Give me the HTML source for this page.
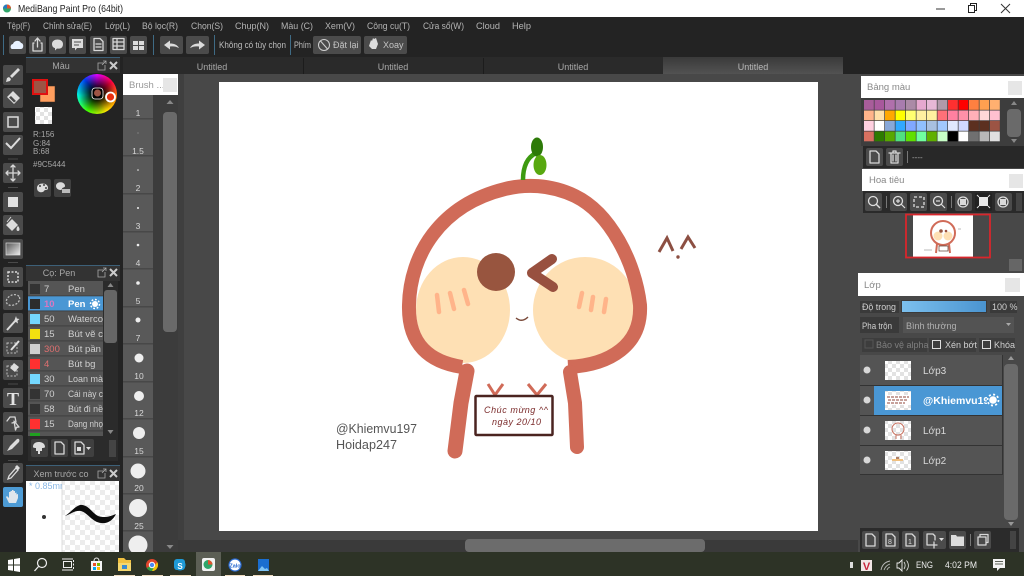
<!DOCTYPE html>
<html><head><meta charset="utf-8"><title>MediBang Paint Pro</title>
<style>
html,body{margin:0;padding:0;width:1024px;height:576px;overflow:hidden;background:#484848}
svg{position:absolute;left:0;top:0;display:block}
text{font-family:"Liberation Sans","DejaVu Sans",sans-serif;font-size:9px;fill:#bdbdbd}
.m{font-size:9.5px;fill:#b4b4b4}
.b{fill:#4b4b4b}
.i{fill:none;stroke:#d8d8d8;stroke-width:1.3;stroke-linecap:round;stroke-linejoin:round}
.f{fill:#dcdcdc}
.n{font-size:9.5px;fill:#cfcfcf}
.s{fill:#d8d8d8;font-size:8.5px;text-anchor:middle}
.h{fill:#a8a8a8;font-size:9.5px}
#pal rect{width:9.8px;height:9.8px}
#wheel{position:absolute;left:77px;top:74px;width:40px;height:40px;border-radius:50%;background:radial-gradient(circle,#000 0,#000 16%,rgba(0,0,0,0) 68%),conic-gradient(#e000ff,#ff0040 50deg,#ff8000 100deg,#ffe000 150deg,#40ff00 210deg,#00ffe0 265deg,#0040ff 320deg,#e000ff)}
</style></head>
<body>
<svg width="1024" height="576" viewBox="0 0 1024 576" xmlns="http://www.w3.org/2000/svg">
<defs>
<pattern id="ck" width="8" height="8" patternUnits="userSpaceOnUse"><rect width="8" height="8" fill="#fff"/><rect width="4" height="4" fill="#e2e2e2"/><rect x="4" y="4" width="4" height="4" fill="#e2e2e2"/></pattern>
<pattern id="ck2" width="10" height="10" patternUnits="userSpaceOnUse"><rect width="10" height="10" fill="#fff"/><rect width="5" height="5" fill="#ececec"/><rect x="5" y="5" width="5" height="5" fill="#ececec"/></pattern>
<linearGradient id="tab" x1="0" y1="0" x2="0" y2="1"><stop offset="0" stop-color="#3a3a3a"/><stop offset="1" stop-color="#525252"/></linearGradient>
<linearGradient id="sl" x1="0" y1="0" x2="1" y2="0"><stop offset="0" stop-color="#7cc0ee"/><stop offset="1" stop-color="#4a94d0"/></linearGradient>
<linearGradient id="gr" x1="0" y1="0" x2="1" y2="1"><stop offset="0" stop-color="#555"/><stop offset="1" stop-color="#eee"/></linearGradient>
</defs>

<!-- base -->
<rect width="1024" height="576" fill="#484848"/>
<rect width="1024" height="17" fill="#fff"/>
<rect y="17" width="1024" height="57" fill="#232323"/>

<!-- title bar -->
<circle cx="7" cy="8.5" r="4" fill="#2fa56a"/><path d="M7 4.5a4 4 0 0 1 4 4H7z" fill="#e0532f"/><path d="M3 8.500a4 4 0 0 1 4-4v4z" fill="#2a7ac0"/>
<text x="18" y="12" style="font-size:10.5px;fill:#222" textLength="105" lengthAdjust="spacingAndGlyphs">MediBang Paint Pro (64bit)</text>
<path d="M936 9h9" stroke="#333" stroke-width="1"/>
<rect x="968.500" y="5.500" width="6" height="7" fill="#fff" stroke="#222"/><path d="M970.500 5.500v-2h6v7h-2" fill="none" stroke="#222"/>
<path d="M1001 4l9 9M1010 4l-9 9" stroke="#333" stroke-width="1"/>

<!-- menu -->
<text class="m" x="7" y="29" textLength="23" lengthAdjust="spacingAndGlyphs">Tệp(F)</text>
<text class="m" x="43" y="29" textLength="49" lengthAdjust="spacingAndGlyphs">Chỉnh sửa(E)</text>
<text class="m" x="105" y="29" textLength="25" lengthAdjust="spacingAndGlyphs">Lớp(L)</text>
<text class="m" x="142" y="29" textLength="36" lengthAdjust="spacingAndGlyphs">Bộ lọc(R)</text>
<text class="m" x="191" y="29" textLength="32" lengthAdjust="spacingAndGlyphs">Chọn(S)</text>
<text class="m" x="235" y="29" textLength="34" lengthAdjust="spacingAndGlyphs">Chụp(N)</text>
<text class="m" x="281" y="29" textLength="32" lengthAdjust="spacingAndGlyphs">Màu (C)</text>
<text class="m" x="325" y="29" textLength="30" lengthAdjust="spacingAndGlyphs">Xem(V)</text>
<text class="m" x="367" y="29" textLength="43" lengthAdjust="spacingAndGlyphs">Công cụ(T)</text>
<text class="m" x="423" y="29" textLength="41" lengthAdjust="spacingAndGlyphs">Cửa sổ(W)</text>
<text class="m" x="476" y="29" textLength="24" lengthAdjust="spacingAndGlyphs">Cloud</text>
<text class="m" x="512" y="29" textLength="19" lengthAdjust="spacingAndGlyphs">Help</text>

<!-- toolbar -->
<rect x="3" y="35" width="1" height="20" fill="#3f6b85"/>
<rect x="9" y="36" width="17" height="18" rx="2" class="b"/><path d="M12 49c-2 0-2-5 1-5 1-4 7-4 8-1 3 0 3 6 0 6z" fill="#e8f2ff"/>
<rect x="29" y="36" width="17" height="18" rx="2" class="b"/><path class="i" d="M34 43h-1v8h9v-8h-1M37.500 47v-8M35 41l2.500-3 2.500 3"/>
<rect x="49" y="36" width="17" height="18" rx="2" class="b"/><path class="f" d="M52 44c0-6 11-6 11 0s-6 4.500-6 4.500l-2 2v-2.500c-1 0-3-1-3-4z"/>
<rect x="69" y="36" width="17" height="18" rx="2" class="b"/><path class="f" d="M72 39h11v9h-6l-2 2.500v-2.500h-3z"/><path d="M74 42h7M74 45h5" stroke="#4b4b4b"/>
<rect x="90" y="36" width="17" height="18" rx="2" class="b"/><path class="i" d="M94 38.500h6l3 3v9h-9zM96 44h5M96 47h5"/>
<rect x="110" y="36" width="17" height="18" rx="2" class="b"/><path class="i" d="M113 38.500h11v11h-11zM113 42h11M113 46h11M117 38.500v11"/>
<rect x="130" y="36" width="17" height="18" rx="2" class="b"/><path class="f" d="M133 41h5v4h-5zM139 41h5v4h-5zM133 46h5v4h-5zM139 46h5v4h-5z"/>
<rect x="153" y="35" width="1" height="20" fill="#3f6b85"/>
<rect x="160" y="36" width="23" height="18" rx="2" class="b"/><path class="f" d="M164 45l6-4.500v3c4 0 7 1 9 4.500-3-1.500-5-2-9-1.500v3z"/>
<rect x="186" y="36" width="23" height="18" rx="2" class="b"/><path class="f" d="M205 45l-6-4.500v3c-4 0-7 1-9 4.500 3-1.500 5-2 9-1.500v3z"/>
<rect x="214" y="35" width="1" height="20" fill="#3f6b85"/>
<text x="219" y="48" style="font-size:9px;fill:#bdbdbd" textLength="67" lengthAdjust="spacingAndGlyphs">Không có tùy chọn</text>
<rect x="290" y="35" width="1" height="20" fill="#3f6b85"/>
<text x="294" y="48" style="font-size:9px;fill:#bdbdbd" textLength="17" lengthAdjust="spacingAndGlyphs">Phím</text>
<rect x="313" y="36" width="48" height="18" rx="2" class="b"/><circle cx="324" cy="45" r="5.500" fill="none" stroke="#d0d0d0"/><path d="M320.500 41l7 8" stroke="#d0d0d0"/>
<text x="333" y="48" style="font-size:9px;fill:#c4c4c4">Đặt lại</text>
<rect x="364" y="36" width="43" height="18" rx="2" class="b"/><path class="f" d="M369 46l2-6 1 1 1-3 1 1 2-1 1 3 1 3-2 5h-4z"/>
<text x="383" y="48" style="font-size:9px;fill:#c4c4c4">Xoay</text>

<!-- tabs -->
<rect x="123" y="57" width="720" height="17" fill="#2a2a2a"/>
<rect x="303" y="58" width="1" height="16" fill="#1c1c1c"/><rect x="483" y="58" width="1" height="16" fill="#1c1c1c"/>
<rect x="663" y="57" width="180" height="17" fill="url(#tab)"/>
<text x="212" y="70" text-anchor="middle" style="fill:#a8a8a8">Untitled</text>
<text x="393" y="70" text-anchor="middle" style="fill:#a8a8a8">Untitled</text>
<text x="573" y="70" text-anchor="middle" style="fill:#a8a8a8">Untitled</text>
<text x="753" y="70" text-anchor="middle" style="fill:#b8b8b8">Untitled</text>

<!-- left column -->
<rect y="57" width="123" height="495" fill="#232323"/>
<!-- tool buttons -->
<g>
<rect x="3" y="65" width="20" height="20" rx="2" class="b"/><path d="M6 82l1-4 2-1 2 2-1 2zM10 76l8-8 2 2-8 8z" class="f"/>
<rect x="3" y="88" width="20" height="20" rx="2" class="b"/><path class="f" d="M13 91l7 7-6 6-7-7z"/><path d="M11 96l5 5-2 1.500-5-5z" fill="#4b4b4b"/>
<rect x="3" y="112" width="20" height="20" rx="2" class="b"/><rect x="8" y="117" width="10" height="10" fill="none" stroke="#dcdcdc" stroke-width="1.500"/>
<rect x="3" y="135" width="20" height="20" rx="2" class="b"/><path d="M6 143l5 5 9-10" stroke="#dcdcdc" stroke-width="2" fill="none"/>
<rect x="8" y="158.500" width="10" height="1" fill="#4a4a4a"/>
<rect x="3" y="163" width="20" height="20" rx="2" class="b"/><path class="i" d="M13 165v16M6 173h14M11 167l2-2 2 2M11 179l2 2 2-2M8 171l-2 2 2 2M18 171l2 2-2 2"/>
<rect x="8" y="187" width="10" height="1" fill="#4a4a4a"/>
<rect x="3" y="192" width="20" height="20" rx="2" class="b"/><rect x="8" y="197" width="10" height="10" fill="#e2e2e2"/>
<rect x="3" y="215" width="20" height="20" rx="2" class="b"/><path class="f" d="M6 225l6-6 6 6-6 6z"/><path d="M18 226c2 2 2 5 0 5s-2-3 0-5z" fill="#dcdcdc"/><path d="M7 222l4-5" stroke="#dcdcdc"/>
<rect x="3" y="239" width="20" height="20" rx="2" class="b"/><rect x="6" y="243" width="14" height="12" fill="url(#gr)" stroke="#ddd" stroke-width=".7"/>
<rect x="8" y="262" width="10" height="1" fill="#4a4a4a"/>
<rect x="3" y="267" width="20" height="20" rx="2" class="b"/><rect x="8" y="272" width="10" height="10" fill="none" stroke="#dcdcdc" stroke-width="1.500" stroke-dasharray="2 1.500"/>
<rect x="3" y="290" width="20" height="20" rx="2" class="b"/><ellipse cx="13" cy="300" rx="7" ry="5" transform="rotate(-25 13 300)" fill="none" stroke="#bbb" stroke-width="1.300" stroke-dasharray="2 1.500"/>
<rect x="3" y="313" width="20" height="20" rx="2" class="b"/><path d="M7 330l9-10" stroke="#dcdcdc" stroke-width="2"/><path d="M16 316l.8 2.500 2.700.5-2 1.800.5 2.700-2.200-1.500-2.300 1z" fill="#dcdcdc"/>
<rect x="3" y="337" width="20" height="20" rx="2" class="b"/><rect x="7" y="343" width="10" height="10" fill="none" stroke="#bbb" stroke-dasharray="2 1.500"/><path d="M11 350l8-9" stroke="#e0e0e0" stroke-width="2"/>
<rect x="3" y="360" width="20" height="20" rx="2" class="b"/><rect x="7" y="366" width="10" height="10" fill="none" stroke="#bbb" stroke-dasharray="2 1.500"/><path class="f" d="M14 363l5 4-4 5-5-4z"/>
<rect x="8" y="383.500" width="10" height="1" fill="#4a4a4a"/>
<rect x="3" y="388" width="20" height="20" rx="2" class="b"/><text x="13" y="405" text-anchor="middle" style="font-family:'Liberation Serif',serif;font-size:18px;font-weight:bold;fill:#e4e4e4">T</text>
<rect x="3" y="412" width="20" height="20" rx="2" class="b"/><path class="i" d="M7 421l3-4h5l1 5-4 1M14 421l5 6-2.500.3-1 2.700z"/>
<rect x="3" y="435" width="20" height="20" rx="2" class="b"/><path class="f" d="M7 451l3-5 7-7c2-1 3 1 2 3l-7 7z"/>
<rect x="8" y="460" width="10" height="1" fill="#4a4a4a"/>
<rect x="3" y="463" width="20" height="20" rx="2" class="b"/><path d="M8 479l1-3 7-8 2 2-7 8z" fill="none" stroke="#dcdcdc" stroke-width="1.300"/><path d="M15 467l2-2 3 3-2 2z" fill="#dcdcdc"/>
<rect x="3" y="487" width="20" height="20" rx="2" fill="#4d9bd5"/><path d="M9 503l-3-6 1-1 2 2v-6h1.500v-1h1.500v-1h1.500v1h1.500v2l1.500-.5v2l1.500-.5v4l-2 5z" fill="#dfe6ec"/>
</g>

<!-- Colour panel -->
<rect x="26" y="57" width="94" height="1" fill="#3d6078"/>
<rect x="26" y="58" width="94" height="15" fill="#333"/>
<text x="61" y="69" class="h" text-anchor="middle" style="font-size:9px">Màu</text>
<path d="M104 63h-6v7h7v-5M102 65l4-4M103 61h3v3" fill="none" stroke="#aaa" stroke-width=".8"/>
<path d="M110 62l7 7M117 62l-7 7" stroke="#ccc" stroke-width="2"/>
<rect x="40" y="86" width="15" height="16" fill="#ff9e5e" stroke="#3a2a20" stroke-width=".5"/>
<rect x="33" y="80" width="14" height="14" fill="#9c5444" stroke="#e01010" stroke-width="2"/>
<rect x="35" y="107" width="17" height="17" fill="url(#ck)"/>
<text x="33" y="137" style="font-size:8px;fill:#a6a6a6">R:156</text>
<text x="33" y="146" style="font-size:8px;fill:#a6a6a6">G:84</text>
<text x="33" y="154" style="font-size:8px;fill:#a6a6a6">B:68</text>
<text x="33" y="167" style="font-size:8px;fill:#a6a6a6">#9C5444</text>
<rect x="34" y="179" width="17" height="18" rx="2" fill="#404040"/><path class="f" d="M37 188c0-6 11-6 11 0 0 3-3 1-4 3s-7 2-7-3z"/><circle cx="40" cy="186" r="1" fill="#404040"/><circle cx="44" cy="185" r="1" fill="#404040"/><circle cx="46" cy="188" r="1" fill="#404040"/>
<rect x="54" y="179" width="17" height="18" rx="2" fill="#404040"/><path class="f" d="M56 186c0-5 9-5 9 0 0 2-3 1-3 3s-6 1-6-3z"/><rect x="62" y="189" width="8" height="4" fill="#bbb"/>

<!-- Brush panel -->
<rect x="26" y="265" width="94" height="1" fill="#3d6078"/>
<rect x="26" y="266" width="94" height="15" fill="#333"/>
<text x="59" y="276" class="h" text-anchor="middle" style="font-size:9px">Cọ: Pen</text>
<path d="M104 270h-6v7h7v-5M102 272l4-4M103 268h3v3" fill="none" stroke="#aaa" stroke-width=".8"/>
<path d="M110 269l7 7M117 269l-7 7" stroke="#ccc" stroke-width="2"/>
<rect x="28" y="281" width="75" height="155" fill="#555"/>
<rect x="28" y="296" width="75" height="15" fill="#4a97d4"/>
<g fill="#3a3a3a"><rect x="28" y="295.500" width="75" height=".8"/><rect x="28" y="310.500" width="75" height=".8"/><rect x="28" y="325.500" width="75" height=".8"/><rect x="28" y="340.500" width="75" height=".8"/><rect x="28" y="355.500" width="75" height=".8"/><rect x="28" y="370.500" width="75" height=".8"/><rect x="28" y="385.500" width="75" height=".8"/><rect x="28" y="400.500" width="75" height=".8"/><rect x="28" y="415.500" width="75" height=".8"/><rect x="28" y="430.500" width="75" height=".8"/></g>
<rect x="30" y="284" width="10" height="10" fill="#333"/>
<rect x="30" y="299" width="10" height="10" fill="#2c2c2c"/>
<rect x="30" y="314" width="10" height="10" fill="#74d8ff"/>
<rect x="30" y="329" width="10" height="10" fill="#f2e010"/>
<rect x="30" y="344" width="10" height="10" fill="#d0d0d0"/>
<rect x="30" y="359" width="10" height="10" fill="#ff3030"/>
<rect x="30" y="374" width="10" height="10" fill="#74d8ff"/>
<rect x="30" y="389" width="10" height="10" fill="#333"/>
<rect x="30" y="404" width="10" height="10" fill="#333"/>
<rect x="30" y="419" width="10" height="10" fill="#ff3030"/>
<rect x="30" y="433" width="10" height="3" fill="#20a020"/>
<text class="n" x="44" y="292">7</text><text class="n" x="68" y="292">Pen</text>
<text class="n" x="44" y="307" style="fill:#d878c0;font-weight:bold">10</text><text class="n" x="68" y="307" style="fill:#fff;font-weight:bold">Pen</text>
<circle cx="95" cy="304" r="3" fill="#fff"/><circle cx="95" cy="304" r="4.500" fill="none" stroke="#fff" stroke-width="1.500" stroke-dasharray="1.800 1.700"/>
<text class="n" x="44" y="322">50</text><text class="n" x="68" y="322" textLength="35" lengthAdjust="spacingAndGlyphs">Waterco</text>
<text class="n" x="44" y="337">15</text><text class="n" x="68" y="337" textLength="35" lengthAdjust="spacingAndGlyphs">Bút vẽ c</text>
<text class="n" x="44" y="352" style="fill:#e07070">300</text><text class="n" x="68" y="352" textLength="33" lengthAdjust="spacingAndGlyphs">Bút pần</text>
<text class="n" x="44" y="367" style="fill:#e07070">4</text><text class="n" x="68" y="367">Bút bg</text>
<text class="n" x="44" y="382">30</text><text class="n" x="68" y="382" textLength="35" lengthAdjust="spacingAndGlyphs">Loan mà</text>
<text class="n" x="44" y="397">70</text><text class="n" x="68" y="397" textLength="35" lengthAdjust="spacingAndGlyphs">Cái này c</text>
<text class="n" x="44" y="412">58</text><text class="n" x="68" y="412" textLength="35" lengthAdjust="spacingAndGlyphs">Bút đi nề</text>
<text class="n" x="44" y="427">15</text><text class="n" x="68" y="427" textLength="35" lengthAdjust="spacingAndGlyphs">Dạng nhọ</text>
<rect x="103" y="281" width="15" height="155" fill="#2b2b2b"/>
<rect x="104" y="290" width="13" height="53" rx="3" fill="#666"/>
<path d="M110.500 283l-3 4h6zM110.500 434l-3-4h6z" fill="#888"/>
<rect x="28" y="436" width="90" height="25" fill="#2b2b2b"/>
<rect x="31" y="439" width="17" height="18" rx="2" fill="#404040"/><path class="f" d="M33 447c0-5 5-5 6-5 2 0 6 1 6 5 0 1-3 1-3 1v3h-2v3h-2v-3h-2v-3s-3 0-3-1z"/>
<rect x="51" y="439" width="17" height="18" rx="2" fill="#404040"/><path class="i" d="M55 442h6l3 3v9h-9z"/>
<rect x="71" y="439" width="23" height="18" rx="2" fill="#404040"/><path class="i" d="M75 442h6l3 3v9h-9z"/><rect x="77" y="447" width="4" height="4" fill="#ddd"/><path d="M86 447l5 0-2.500 3z" fill="#ddd"/>
<rect x="109" y="440" width="7" height="17" fill="#444"/>

<!-- Preview panel -->
<rect x="26" y="465" width="94" height="1" fill="#3d6078"/>
<rect x="26" y="466" width="94" height="15" fill="#333"/>
<text x="61" y="477" class="h" text-anchor="middle" style="font-size:9px">Xem trước co</text>
<path d="M104 471h-6v7h7v-5M102 473l4-4M103 469h3v3" fill="none" stroke="#aaa" stroke-width=".8"/>
<path d="M110 470l7 7M117 470l-7 7" stroke="#ccc" stroke-width="2"/>
<rect x="26" y="481" width="36" height="71" fill="#fff"/>
<rect x="62" y="481" width="57" height="71" fill="url(#ck2)"/>
<rect x="61.500" y="481" width="1" height="71" fill="#ddd"/>
<svg x="26" y="481" width="36" height="20"><text x="3" y="8" style="font-size:9px;fill:#8ab8e6">* 0.85mm</text></svg>
<circle cx="44" cy="517" r="2" fill="#333"/>
<path d="M65 516c5-3 9-9 15-11 8-1 12 8 18 11 6 2 11 1 18-2-3 6-8 10-15 9-9-1-13-10-20-12-6-1-10 3-16 5z" fill="#0c0c0c"/>

<!-- Brush size panel -->
<rect x="123" y="74" width="55" height="478" fill="#3c3c3c"/>
<rect x="123" y="74" width="55" height="21" fill="#fff"/>
<text x="129" y="88" style="font-size:9.5px;fill:#999">Brush ...</text>
<rect x="163" y="78" width="14" height="14" fill="#e6e6e6"/>
<rect x="123" y="95" width="30" height="457" fill="#595959"/>
<g fill="#484848"><rect x="123" y="118" width="30" height="1.500"/><rect x="123" y="155" width="30" height="1.500"/><rect x="123" y="193" width="30" height="1.500"/><rect x="123" y="231" width="30" height="1.500"/><rect x="123" y="268" width="30" height="1.500"/><rect x="123" y="306" width="30" height="1.500"/><rect x="123" y="343" width="30" height="1.500"/><rect x="123" y="381" width="30" height="1.500"/><rect x="123" y="418" width="30" height="1.500"/><rect x="123" y="456" width="30" height="1.500"/><rect x="123" y="493" width="30" height="1.500"/><rect x="123" y="530" width="30" height="1.500"/></g>
<g fill="#eee">
<circle cx="138" cy="133" r=".6" fill="#999"/><circle cx="138" cy="170" r=".8"/><circle cx="138" cy="208" r="1"/><circle cx="138" cy="245" r="1.300"/><circle cx="138" cy="283" r="1.800"/><circle cx="138" cy="320" r="2.500"/><circle cx="139" cy="358" r="4.500"/><circle cx="139" cy="396" r="5"/><circle cx="139" cy="433" r="6"/><circle cx="138" cy="471" r="7.500"/><circle cx="138" cy="508" r="9"/><circle cx="138" cy="545" r="9.500"/>
</g>
<g class="s"><text class="s" x="138" y="116">1</text><text class="s" x="138" y="154">1.5</text><text class="s" x="138" y="191">2</text><text class="s" x="138" y="229">3</text><text class="s" x="138" y="266">4</text><text class="s" x="138" y="304">5</text><text class="s" x="138" y="341">7</text><text class="s" x="139" y="379">10</text><text class="s" x="139" y="416">12</text><text class="s" x="139" y="454">15</text><text class="s" x="139" y="491">20</text><text class="s" x="139" y="529">25</text></g>
<rect x="163" y="112" width="14" height="220" rx="4" fill="#6a6a6a"/>
<path d="M170 100l-3.500 4h7zM170 549l-3.500-4h7z" fill="#888"/>

<!-- canvas area -->
<rect x="178" y="74" width="683" height="466" fill="#484848"/>
<rect x="178" y="74" width="6" height="466" fill="#3f3f3f"/>
<rect x="178" y="540" width="680" height="12" fill="#3a3a3a"/>
<rect x="465" y="539" width="240" height="13" rx="4" fill="#6c6c6c"/>
<rect x="219" y="82" width="599" height="449" fill="#fff"/>

<!-- drawing -->
<ellipse cx="463" cy="310" rx="47" ry="53" fill="#fee0b4"/>
<ellipse cx="585" cy="310" rx="52" ry="53" fill="#fee0b4"/>
<path d="M462 367C430 362 408 345 409 305C410 255 440 205 505 189C525 184 550 184 575 196C610 213 635 262 640 305C642 345 610 365 568 367" fill="none" stroke="#d06b58" stroke-width="14" stroke-linejoin="round"/>
<path d="M467 371L461 403L455 451" fill="none" stroke="#d06b58" stroke-width="15" stroke-linecap="round"/>
<path d="M570 372L575 403L577 447" fill="none" stroke="#d06b58" stroke-width="14" stroke-linecap="round"/>
<circle cx="496" cy="272" r="19" fill="#98553f"/>
<path d="M552 259L532 273L553 287" fill="none" stroke="#98503f" stroke-width="10" stroke-linecap="round" stroke-linejoin="round"/>
<g fill="none" stroke="#ffb48a" stroke-width="4.500" stroke-linecap="round">
<path d="M437 295L439 312M450 293L454 309M464 290L468 304M582 293L579 307M593 297L591 310M606 299L604 312"/>
</g>
<path d="M516 318Q522 323 528 317" fill="none" stroke="#7a4a3a" stroke-width="1.400"/>
<path d="M659 252L667 238L673 251M681 249L688 237L695 248" fill="none" stroke="#8c4f42" stroke-width="3"/>
<circle cx="678" cy="257" r="1.700" fill="#8c4f42"/>
<path d="M523 180C523 165 528 157 536 153" fill="none" stroke="#3d9a10" stroke-width="4.500"/>
<ellipse cx="537" cy="147" rx="6" ry="9.500" fill="#2d7a08"/>
<ellipse cx="540" cy="165" rx="6.500" ry="10" fill="#58a810"/>
<path d="M488 384L495 395L503 384M528 384L537 395L546 384" fill="none" stroke="#d06b58" stroke-width="3"/>
<rect x="475.500" y="396" width="77" height="39" fill="#fff" stroke="#4a2420" stroke-width="2.500" rx="1"/>
<text x="484" y="413" style="font-size:9px;font-style:italic;fill:#7a2a2a" textLength="64" lengthAdjust="spacing">Chúc mừng ^^</text>
<text x="492" y="425" style="font-size:9px;font-style:italic;fill:#7a2a2a" textLength="49" lengthAdjust="spacing">ngày 20/10</text>
<text x="336" y="433" style="font-size:13px;fill:#555" textLength="81" lengthAdjust="spacingAndGlyphs">@Khiemvu197</text>
<text x="336" y="449" style="font-size:13px;fill:#555" textLength="61" lengthAdjust="spacingAndGlyphs">Hoidap247</text>

<!-- Palette -->
<rect x="861" y="76" width="163" height="22" fill="#fff"/>
<text x="867" y="90" style="font-size:9.5px;fill:#888">Bảng màu</text>
<rect x="1008" y="81" width="14" height="14" fill="#e6e6e6"/>
<rect x="861" y="98" width="163" height="48" fill="#3d3d3d"/>
<g id="pal">
<rect x="864" y="100" width="9" height="9" fill="#a85d9a"/><rect x="874.500" y="100" width="9" height="9" fill="#a8589c"/><rect x="885" y="100" width="9" height="9" fill="#b070ac"/><rect x="895.500" y="100" width="9" height="9" fill="#a87cae"/><rect x="906" y="100" width="9" height="9" fill="#ab8aa6"/><rect x="916.500" y="100" width="9" height="9" fill="#e6a8cf"/><rect x="927" y="100" width="9" height="9" fill="#e6b8d6"/><rect x="937.500" y="100" width="9" height="9" fill="#b09aaa"/><rect x="948" y="100" width="9" height="9" fill="#ff3030"/><rect x="958.500" y="100" width="9" height="9" fill="#f00"/><rect x="969" y="100" width="9" height="9" fill="#ff8040"/><rect x="979.500" y="100" width="9" height="9" fill="#ffa050"/><rect x="990" y="100" width="9" height="9" fill="#ffb070"/>
<rect x="864" y="110.500" width="9" height="9" fill="#ffb48a"/><rect x="874.500" y="110.500" width="9" height="9" fill="#ffe0a8"/><rect x="885" y="110.500" width="9" height="9" fill="#ffa800"/><rect x="895.500" y="110.500" width="9" height="9" fill="#ff0"/><rect x="906" y="110.500" width="9" height="9" fill="#ffff70"/><rect x="916.500" y="110.500" width="9" height="9" fill="#fff0a0"/><rect x="927" y="110.500" width="9" height="9" fill="#fff0a0"/><rect x="937.500" y="110.500" width="9" height="9" fill="#ff7078"/><rect x="948" y="110.500" width="9" height="9" fill="#ff80a0"/><rect x="958.500" y="110.500" width="9" height="9" fill="#ff90a8"/><rect x="969" y="110.500" width="9" height="9" fill="#ffb0b8"/><rect x="979.500" y="110.500" width="9" height="9" fill="#ffd8d8"/><rect x="990" y="110.500" width="9" height="9" fill="#ffc0d0"/>
<rect x="864" y="121" width="9" height="9" fill="#ffd0e0"/><rect x="874.500" y="121" width="9" height="9" fill="#fff"/><rect x="885" y="121" width="9" height="9" fill="#88a8d8"/><rect x="895.500" y="121" width="9" height="9" fill="#30a8ff"/><rect x="906" y="121" width="9" height="9" fill="#80a8ff"/><rect x="916.500" y="121" width="9" height="9" fill="#90c0ff"/><rect x="927" y="121" width="9" height="9" fill="#a8c0e0"/><rect x="937.500" y="121" width="9" height="9" fill="#a0c8ff"/><rect x="948" y="121" width="9" height="9" fill="#e0e8ff"/><rect x="958.500" y="121" width="9" height="9" fill="#d0d8ff"/><rect x="969" y="121" width="9" height="9" fill="#5c3020"/><rect x="979.500" y="121" width="9" height="9" fill="#5c3020"/><rect x="990" y="121" width="9" height="9" fill="#9c5444"/>
<rect x="864" y="131.500" width="9" height="9" fill="#d87060"/><rect x="874.500" y="131.500" width="9" height="9" fill="#2e7a00"/><rect x="885" y="131.500" width="9" height="9" fill="#58a800"/><rect x="895.500" y="131.500" width="9" height="9" fill="#50e080"/><rect x="906" y="131.500" width="9" height="9" fill="#60e000"/><rect x="916.500" y="131.500" width="9" height="9" fill="#70ffa0"/><rect x="927" y="131.500" width="9" height="9" fill="#60b000"/><rect x="937.500" y="131.500" width="9" height="9" fill="#c8ffc8"/><rect x="948" y="131.500" width="9" height="9" fill="#000"/><rect x="958.500" y="131.500" width="9" height="9" fill="#fff"/><rect x="969" y="131.500" width="9" height="9" fill="#707070"/><rect x="979.500" y="131.500" width="9" height="9" fill="#b8b8b8"/><rect x="990" y="131.500" width="9" height="9" fill="#e0e0e0"/>
</g>
<rect x="1007" y="109" width="14" height="28" rx="4" fill="#6a6a6a"/>
<path d="M1014 101l-3 4h6zM1014 143l-3-4h6z" fill="#888"/>
<rect x="863" y="146" width="161" height="22" fill="#282828"/>
<rect x="866" y="148" width="17" height="18" rx="2" class="b"/><path class="i" d="M870 151h6l3 3v9h-9z"/>
<rect x="886" y="148" width="17" height="18" rx="2" class="b"/><path class="i" d="M889 153h11M891 153v10h7v-10M893 153v-2h3v2M893 155v6M896 155v6"/>
<rect x="907" y="151" width="1" height="12" fill="#777"/>
<text x="912" y="160" style="font-size:8px;fill:#aaa">----</text>

<!-- Navigator -->
<rect x="862" y="169" width="162" height="22" fill="#fff"/>
<text x="869" y="183" style="font-size:9.5px;fill:#888">Hoa tiêu</text>
<rect x="1009" y="174" width="14" height="14" fill="#e6e6e6"/>
<rect x="863" y="191" width="161" height="22" fill="#2a2a2a"/>
<g>
<rect x="865" y="193" width="17" height="18" rx="2" class="b"/><circle cx="873" cy="201" r="4.500" fill="none" stroke="#ddd" stroke-width="1.300"/><path d="M876 204l4 4" stroke="#ddd" stroke-width="1.500"/>
<rect x="886" y="196" width="1" height="12" fill="#777"/>
<rect x="890" y="193" width="17" height="18" rx="2" class="b"/><circle cx="898" cy="201" r="4.500" fill="none" stroke="#ddd" stroke-width="1.300"/><path d="M901 204l4 4M896 201h4M898 199v4" stroke="#ddd" stroke-width="1.200"/>
<rect x="910" y="193" width="17" height="18" rx="2" class="b"/><rect x="914" y="197" width="10" height="10" fill="none" stroke="#ddd" stroke-width="1.300" stroke-dasharray="3 2"/>
<rect x="930" y="193" width="17" height="18" rx="2" class="b"/><circle cx="938" cy="201" r="4.500" fill="none" stroke="#ddd" stroke-width="1.300"/><path d="M941 204l4 4M936 201h4" stroke="#ddd" stroke-width="1.200"/>
<rect x="951" y="196" width="1" height="12" fill="#777"/>
<rect x="955" y="193" width="17" height="18" rx="2" class="b"/><circle cx="963" cy="202" r="5" fill="none" stroke="#ddd" stroke-width="1.300"/><path class="f" d="M960 199h6v6h-6z"/>
<rect x="975" y="193" width="17" height="18" rx="2" fill="#222"/><rect x="979" y="197" width="9" height="9" fill="#e8e8e8"/><path d="M977 195l2 2M990 195l-2 2M977 208l2-2M990 208l-2-2" stroke="#ddd"/>
<rect x="995" y="193" width="17" height="18" rx="2" class="b"/><circle cx="1003" cy="202" r="5" fill="none" stroke="#ddd" stroke-width="1.300"/><path class="f" d="M1000 199h6v6h-6z"/>
<rect x="1016" y="193" width="6" height="18" fill="#444"/>
</g>
<rect x="913" y="214" width="60" height="43" fill="#fff"/>
<rect x="906" y="214.500" width="84" height="43" fill="none" stroke="#d8262c" stroke-width="1.800"/>
<circle cx="943" cy="233" r="12" fill="#fff" stroke="#d06b58" stroke-width="2"/><circle cx="938" cy="236" r="4.500" fill="#fee0b4"/><circle cx="948" cy="236" r="4.500" fill="#fee0b4"/><circle cx="941" cy="231" r="1.800" fill="#98553f"/><circle cx="946" cy="231" r="1.300" fill="#98503f"/>
<path d="M937 244l-1 9M949 244l1 9" stroke="#d06b58" stroke-width="2"/><rect x="939" y="246" width="9" height="5" fill="#fff" stroke="#5a3a30" stroke-width=".7"/><path d="M924 250h8" stroke="#bbb"/><path d="M958 229h3" stroke="#bbb"/>
<rect x="1009" y="259" width="13" height="12" fill="#666"/>

<!-- Layer panel -->
<rect x="858" y="273" width="166" height="23" fill="#fff"/>
<text x="864" y="288" style="font-size:9.500px;fill:#888">Lớp</text>
<rect x="1005" y="278" width="15" height="14" fill="#e6e6e6"/>
<rect x="858" y="296" width="166" height="256" fill="#484848"/>
<rect x="860" y="301" width="39" height="12" fill="#3a3a3a"/>
<text x="862" y="310" style="fill:#d0d0d0;font-size:9px" textLength="34" lengthAdjust="spacingAndGlyphs">Độ trong</text>
<rect x="901" y="300" width="86" height="13" fill="#3a3a3a"/>
<rect x="902" y="301" width="84" height="11" fill="url(#sl)"/>
<rect x="990" y="301" width="27" height="12" fill="#3a3a3a"/>
<text x="992" y="310" style="fill:#d0d0d0;font-size:9px">100 %</text>
<rect x="860" y="317" width="39" height="16" fill="#3a3a3a"/>
<text x="862" y="329" style="fill:#d0d0d0;font-size:9px" textLength="30" lengthAdjust="spacingAndGlyphs">Pha trộn</text>
<rect x="903" y="317" width="111" height="16" fill="#535353"/>
<text x="906" y="329" style="fill:#b0b0b0;font-size:9px">Bình thường</text>
<path d="M1006 323l5 0-2.500 3z" fill="#aaa"/>
<rect x="862" y="338" width="65" height="14" fill="#3d3d3d"/><rect x="865" y="340" width="8" height="8" fill="none" stroke="#555"/><text x="876" y="348" style="font-size:9px;fill:#7e7e7e">Bảo vệ alpha</text>
<rect x="929" y="338" width="47" height="14" fill="#3d3d3d"/><rect x="932.500" y="340.500" width="8" height="8" fill="none" stroke="#ddd"/><text x="945" y="348" style="font-size:9px;fill:#d0d0d0">Xén bớt</text>
<rect x="979" y="338" width="36" height="14" fill="#3d3d3d"/><rect x="982.500" y="340.500" width="8" height="8" fill="none" stroke="#ddd"/><text x="994" y="348" style="font-size:9px;fill:#d0d0d0">Khóa</text>
<rect x="860" y="355" width="143" height="120" fill="#545454"/>
<rect x="874" y="386" width="129" height="29" fill="#4a97d4"/>
<rect x="860" y="385" width="143" height="1" fill="#333"/><rect x="860" y="415" width="143" height="1" fill="#333"/><rect x="860" y="445" width="143" height="1" fill="#333"/><rect x="860" y="474" width="143" height="1" fill="#333"/><rect x="1002" y="355" width="1" height="120" fill="#333"/>
<circle cx="867" cy="370" r="3.500" fill="#d8d8d8"/><circle cx="867" cy="400" r="3.500" fill="#d8d8d8"/><circle cx="867" cy="430" r="3.500" fill="#d8d8d8"/><circle cx="867" cy="460" r="3.500" fill="#d8d8d8"/>
<rect x="885" y="361" width="26" height="19" fill="url(#ck)"/>
<rect x="885" y="391" width="26" height="19" fill="url(#ck)"/><rect x="885" y="395" width="26" height="10" fill="#fff"/><path d="M887 397h22M888 400h20M887 403h18" stroke="#a86a60" stroke-width="1.300" stroke-dasharray="3 1"/>
<rect x="885" y="421" width="26" height="19" fill="url(#ck)"/><circle cx="898" cy="429" r="6" fill="none" stroke="#c8705e"/><path d="M896 435v4M901 435v4" stroke="#c8705e"/>
<rect x="885" y="451" width="26" height="19" fill="url(#ck)"/><path d="M892 460h11" stroke="#f0c080" stroke-width="2"/><path d="M896 458h3" stroke="#a06040" stroke-width="1.500"/>
<text x="923" y="374" style="font-size:10px;fill:#d8d8d8">Lớp3</text>
<svg x="923" y="390" width="64" height="20"><text x="0" y="14" style="font-size:10.500px;font-weight:bold;fill:#fff">@Khiemvu197</text></svg>
<circle cx="993" cy="400" r="3.800" fill="#fff"/><circle cx="993" cy="400" r="5.500" fill="none" stroke="#fff" stroke-width="1.800" stroke-dasharray="2 2.300"/>
<text x="923" y="434" style="font-size:10px;fill:#d8d8d8">Lớp1</text>
<text x="923" y="464" style="font-size:10px;fill:#d8d8d8">Lớp2</text>
<rect x="1004" y="364" width="14" height="156" rx="4" fill="#6a6a6a"/>
<path d="M1011 356l-3 4h6zM1011 526l-3-4h6z" fill="#999"/>
<rect x="860" y="528" width="164" height="24" fill="#2b2b2b"/>
<rect x="1019" y="528" width="5" height="24" fill="#484848"/>
<rect x="862" y="531" width="17" height="18" rx="2" class="b"/><path class="i" d="M866 534h6l3 3v9h-9z"/>
<rect x="882" y="531" width="17" height="18" rx="2" class="b"/><path class="i" d="M886 534h6l3 3v9h-9z"/><text x="890" y="544" text-anchor="middle" style="font-size:7px;fill:#ddd">8</text>
<rect x="902" y="531" width="17" height="18" rx="2" class="b"/><path class="i" d="M906 534h6l3 3v9h-9z"/><text x="910" y="544" text-anchor="middle" style="font-size:7px;fill:#ddd">1</text>
<rect x="923" y="531" width="23" height="18" rx="2" class="b"/><path class="i" d="M927 534h6l2 2v4M927 534v11h4M934 542v6M931 545h6"/><path d="M939 538l5 0-2.500 3z" fill="#ddd"/>
<rect x="949" y="531" width="17" height="18" rx="2" class="b"/><path class="f" d="M951 535h5l1 1.500h7v9.500h-13z"/>
<rect x="970" y="534" width="1" height="12" fill="#777"/>
<rect x="974" y="531" width="17" height="18" rx="2" class="b"/><path class="i" d="M978 537h8v8h-8zM980 537v-2.500h8v8h-2"/>
<rect x="1010" y="531" width="6" height="18" fill="#444"/>

<!-- Taskbar -->
<rect y="552" width="1024" height="24" fill="#2d3326"/>
<rect x="196" y="552" width="25" height="24" fill="#5c5f55"/>
<path d="M8 560l5-.8v5.300H8zM14 559l6-1v6.500h-6zM8 565.500h5v5.300l-5-.8zM14 565.500h6V572l-6-1z" fill="#fff"/>
<circle cx="42" cy="563" r="4.500" fill="none" stroke="#eee" stroke-width="1.200"/><path d="M38.500 566.500L34.500 571" stroke="#eee" stroke-width="1.300"/>
<path d="M62 559h11M62 570h11" stroke="#eee" stroke-width="1.100"/><rect x="63.500" y="561.500" width="8" height="6" fill="none" stroke="#eee"/><path d="M73.500 560v10" stroke="#eee" stroke-dasharray="2 1.500"/>
<path d="M91 561h11v10H91z" fill="#f4f4f4"/><path d="M94 561c0-4 5-4 5 0" fill="none" stroke="#eee"/><rect x="93" y="563" width="3" height="3" fill="#e8502a"/><rect x="97" y="563" width="3" height="3" fill="#7ab800"/><rect x="93" y="567" width="3" height="3" fill="#00a4ef"/><rect x="97" y="567" width="3" height="3" fill="#ffb900"/>
<path d="M118 558h6l2 2h5v11h-13z" fill="#f0c040"/><rect x="118" y="563" width="13" height="8" fill="#f5d76e"/><rect x="122" y="565" width="5" height="4" fill="#3a8ad0"/>
<circle cx="152" cy="565" r="6" fill="#e0452c"/><path d="M152 565l5.200 3a6 6 0 0 1-10.400 0z" fill="#2f9e44"/><path d="M157.200 562a6 6 0 0 1-5.200 9l2-4z" fill="#f4c20d"/><circle cx="152" cy="565" r="2.700" fill="#4a8af4" stroke="#fff"/>
<rect x="174" y="559" width="11" height="11" rx="3" fill="#1f9ad6"/><circle cx="180" cy="565" r="5.500" fill="#1f9ad6"/><text x="180" y="569" text-anchor="middle" style="font-size:8px;font-weight:bold;fill:#fff">S</text>
<rect x="202" y="558" width="13" height="13" rx="2" fill="#f2f2f2"/><circle cx="208" cy="564.500" r="4.500" fill="#2fa56a"/><path d="M208 560a4.500 4.500 0 0 1 4.500 4.500H208z" fill="#e0532f"/>
<circle cx="235" cy="565" r="6" fill="#fff" stroke="#2a6ad0" stroke-width="1.200"/><text x="235" y="567.500" text-anchor="middle" style="font-size:5.500px;font-weight:bold;fill:#2a6ad0">Zalo</text>
<rect x="258" y="559" width="11" height="12" fill="#1a6ed0"/><path d="M258 571l4-5 3 3 2-1 2 3z" fill="#7fc4f4"/>
<g fill="#f0dcc0"><rect x="114" y="575" width="21" height="1"/><rect x="142" y="575" width="21" height="1"/><rect x="170" y="575" width="21" height="1"/><rect x="225" y="575" width="20" height="1"/><rect x="253" y="575" width="20" height="1"/></g>
<rect x="850" y="562" width="3" height="6" fill="#ddd"/>
<rect x="861" y="560" width="11" height="11" fill="#f2e6e6"/><text x="866.500" y="570" text-anchor="middle" style="font-size:11px;font-weight:bold;fill:#c8243c">V</text>
<path d="M881 570c1-5 4-8 9-9M884 570c1-3 3-5 6-6M887 570c.5-1.500 1.500-2.500 3-3" fill="none" stroke="#bbb" stroke-width=".9"/>
<path d="M897 563h2l3-3v11l-3-3h-2z" fill="none" stroke="#eee" stroke-width=".9"/><path d="M904 562c1.500 2 1.500 5 0 7M906.500 560.500c2.500 3 2.500 7 0 10" fill="none" stroke="#eee" stroke-width=".8"/>
<text x="916" y="568" style="font-size:9.500px;fill:#eee" textLength="17" lengthAdjust="spacingAndGlyphs">ENG</text>
<text x="945" y="568" style="font-size:9.500px;fill:#eee" textLength="32" lengthAdjust="spacingAndGlyphs">4:02 PM</text>
<path d="M993 559h12v9h-5l-3 3v-3h-4z" fill="#f4f4f4"/><path d="M995 561.500h8M995 564h8" stroke="#2d3326" stroke-width=".8"/>
</svg>
<div id="wheel"></div>
<svg width="1024" height="576" viewBox="0 0 1024 576" xmlns="http://www.w3.org/2000/svg" style="pointer-events:none">
<rect x="92" y="88" width="11" height="11" rx="3" fill="#000" stroke="#fff" stroke-width=".8"/><circle cx="97.500" cy="93" r="3.500" fill="#9c5444"/>
<circle cx="110.500" cy="97" r="4.500" fill="#e83010" stroke="#fff" stroke-width="1.800"/>
</svg>
</body></html>
